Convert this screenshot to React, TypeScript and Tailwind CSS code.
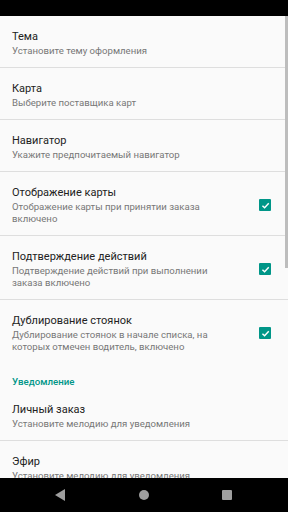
import React from "react";

type Item = { title: string; sub: string; check?: boolean; last?: boolean };

const Check = () => (
  <div className="w-[12px] h-[12px] rounded-[1px] bg-[#009688] flex items-center justify-center shrink-0">
    <svg width="9" height="9" viewBox="0 0 10 10">
      <path d="M1.6 5.2 L4 7.5 L8.6 2.6" fill="none" stroke="#fff" strokeWidth="1.6" />
    </svg>
  </div>
);

const Row = ({ title, sub, check, last }: Item) => (
  <div className={`flex items-center pl-[12px] pt-[13px] pb-[10px] ${last ? "border-b border-transparent" : "border-b border-[#dedede]"}`}>
    <div className="w-[224px] shrink-0">
      <div className="text-[11px] leading-[16px] text-[#222222]">{title}</div>
      <div className="text-[9.6px] leading-[12px] text-[#777777]">{sub}</div>
    </div>
    {check && (
      <div className="ml-[23px]">
        <Check />
      </div>
    )}
  </div>
);

export default function App() {
  return (
    <div
      className="w-[288px] h-[512px] flex flex-col bg-[#fafafa] overflow-hidden"
      style={{ fontFamily: "Roboto, 'Noto Sans', sans-serif" }}
    >
      <div className="h-[16px] bg-black shrink-0" />
      <div className="relative flex-1 overflow-hidden">
        <div className="absolute right-0 top-0 w-[3px] h-[252px] bg-[#bdbdbd]" />
        <Row title="Тема" sub="Установите тему оформления" />
        <Row title="Карта" sub="Выберите поставщика карт" />
        <Row title="Навигатор" sub="Укажите предпочитаемый навигатор" />
        <Row title="Отображение карты" sub="Отображение карты при принятии заказа включено" check />
        <Row title="Подтверждение действий" sub="Подтверждение действий при выполнении заказа включено" check />
        <Row title="Дублирование стоянок" sub="Дублирование стоянок в начале списка, на которых отмечен водитель, включено" check last />
        <div className="pl-[12px] pt-[11px] text-[9.7px] leading-[14px] font-medium text-[#009688]">Уведомление</div>
        <Row title="Личный заказ" sub="Установите мелодию для уведомления" />
        <Row title="Эфир" sub="Установите мелодию для уведомления" />
      </div>
      <div className="h-[34px] bg-black shrink-0 flex items-center">
        <div className="w-[96px] flex justify-center pl-[24px]">
          <svg width="10" height="12" viewBox="0 0 10 12">
            <path d="M10 0 L10 12 L0 6 Z" fill="#9e9e9e" />
          </svg>
        </div>
        <div className="w-[96px] flex justify-center">
          <div className="w-[10px] h-[10px] rounded-full bg-[#9e9e9e]" />
        </div>
        <div className="w-[96px] flex justify-center pr-[26px]">
          <div className="w-[10px] h-[10px] rounded-[1px] bg-[#9e9e9e]" />
        </div>
      </div>
    </div>
  );
}
